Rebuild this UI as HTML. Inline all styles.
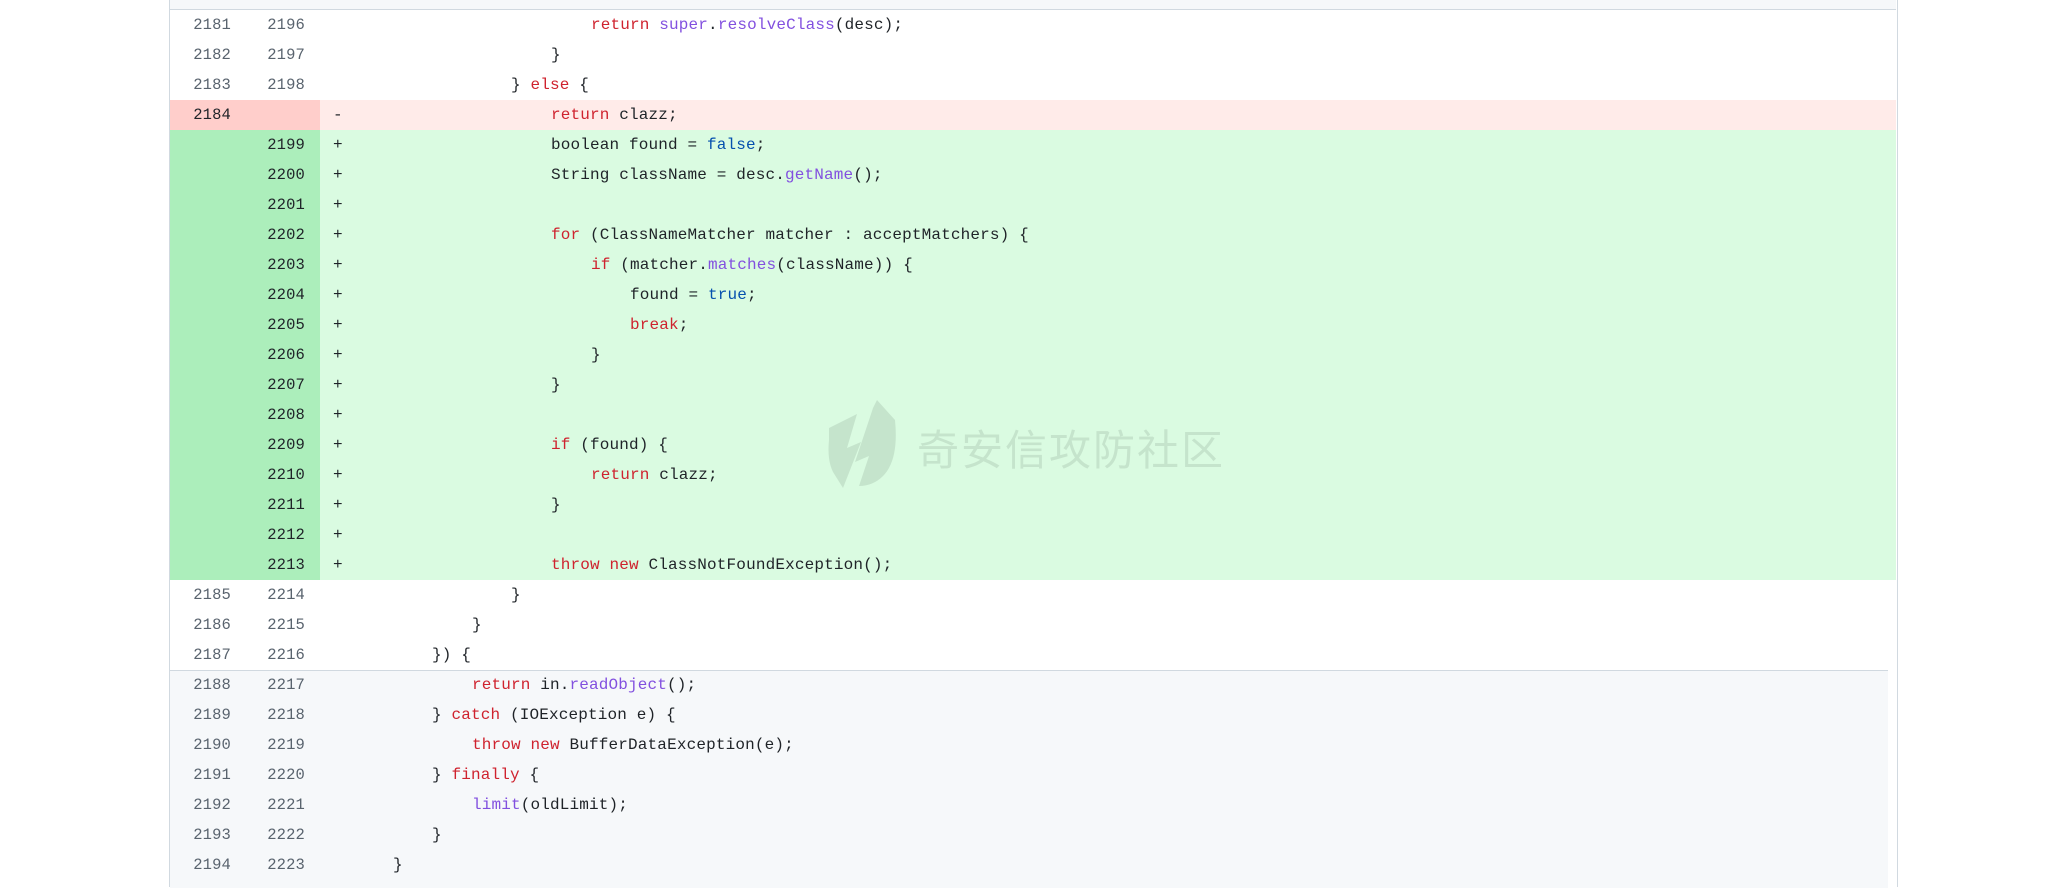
<!DOCTYPE html>
<html><head><meta charset="utf-8"><style>
body{margin:0;width:2054px;height:887px;background:#fff;overflow:hidden;position:relative;font-family:"Liberation Mono",monospace;}
.box{position:absolute;left:169px;top:0;width:1727px;height:887px;border-left:1px solid #d1d9e0;border-right:1px solid #d1d9e0;}
.top{position:absolute;left:170px;top:0;width:1726px;height:9px;background:#f6f8fa;border-bottom:1px solid #d1d9e0;}
.bot{position:absolute;left:170px;top:670px;width:1718px;height:217px;background:#f6f8fa;border-top:1px solid #d1d9e0;}
.row{position:absolute;left:170px;width:1726px;height:30px;line-height:30px;font-size:16px;color:#1f2328;white-space:pre;letter-spacing:0.15px;}
.n1,.n2{position:absolute;top:0;text-align:right;color:#59636e;font-size:15.5px;}
.n1{left:0;width:61px}.n2{left:76px;width:59px}
.g{position:absolute;left:0;top:0;width:150px;height:30px}
.s{position:absolute;left:163px;top:0}
.c{position:absolute;top:0}
.d{background:#ffebe9}.d .g{background:#ffcecb}
.a{background:#dafbe1}.a .g{background:#aceebb}.a .n2,.d .n1{color:#1f2328}
.k{color:#cf222e}.f{color:#8250df}.b{color:#0550ae}
.wm{position:absolute;left:917px;top:417px;font-family:"Noto Sans CJK SC",sans-serif;font-size:42px;color:rgba(60,80,70,0.13);letter-spacing:2px;}
</style></head><body>
<div class="top"></div>
<div class="bot"></div>
<div class="box"></div>
<div class="row" style="top:10px"><span class="n1">2181</span><span class="n2">2196</span><span class="c" style="left:421px"><span class="k">return</span> <span class="f">super</span>.<span class="f">resolveClass</span>(desc);</span></div>
<div class="row" style="top:40px"><span class="n1">2182</span><span class="n2">2197</span><span class="c" style="left:381px">}</span></div>
<div class="row" style="top:70px"><span class="n1">2183</span><span class="n2">2198</span><span class="c" style="left:341px">} <span class="k">else</span> {</span></div>
<div class="row d" style="top:100px"><div class="g"></div><span class="n1">2184</span><span class="s">-</span><span class="c" style="left:381px"><span class="k">return</span> clazz;</span></div>
<div class="row a" style="top:130px"><div class="g"></div><span class="n2">2199</span><span class="s">+</span><span class="c" style="left:381px">boolean found = <span class="b">false</span>;</span></div>
<div class="row a" style="top:160px"><div class="g"></div><span class="n2">2200</span><span class="s">+</span><span class="c" style="left:381px">String className = desc.<span class="f">getName</span>();</span></div>
<div class="row a" style="top:190px"><div class="g"></div><span class="n2">2201</span><span class="s">+</span></div>
<div class="row a" style="top:220px"><div class="g"></div><span class="n2">2202</span><span class="s">+</span><span class="c" style="left:381px"><span class="k">for</span> (ClassNameMatcher matcher : acceptMatchers) {</span></div>
<div class="row a" style="top:250px"><div class="g"></div><span class="n2">2203</span><span class="s">+</span><span class="c" style="left:421px"><span class="k">if</span> (matcher.<span class="f">matches</span>(className)) {</span></div>
<div class="row a" style="top:280px"><div class="g"></div><span class="n2">2204</span><span class="s">+</span><span class="c" style="left:460px">found = <span class="b">true</span>;</span></div>
<div class="row a" style="top:310px"><div class="g"></div><span class="n2">2205</span><span class="s">+</span><span class="c" style="left:460px"><span class="k">break</span>;</span></div>
<div class="row a" style="top:340px"><div class="g"></div><span class="n2">2206</span><span class="s">+</span><span class="c" style="left:421px">}</span></div>
<div class="row a" style="top:370px"><div class="g"></div><span class="n2">2207</span><span class="s">+</span><span class="c" style="left:381px">}</span></div>
<div class="row a" style="top:400px"><div class="g"></div><span class="n2">2208</span><span class="s">+</span></div>
<div class="row a" style="top:430px"><div class="g"></div><span class="n2">2209</span><span class="s">+</span><span class="c" style="left:381px"><span class="k">if</span> (found) {</span></div>
<div class="row a" style="top:460px"><div class="g"></div><span class="n2">2210</span><span class="s">+</span><span class="c" style="left:421px"><span class="k">return</span> clazz;</span></div>
<div class="row a" style="top:490px"><div class="g"></div><span class="n2">2211</span><span class="s">+</span><span class="c" style="left:381px">}</span></div>
<div class="row a" style="top:520px"><div class="g"></div><span class="n2">2212</span><span class="s">+</span></div>
<div class="row a" style="top:550px"><div class="g"></div><span class="n2">2213</span><span class="s">+</span><span class="c" style="left:381px"><span class="k">throw</span> <span class="k">new</span> ClassNotFoundException();</span></div>
<div class="row" style="top:580px"><span class="n1">2185</span><span class="n2">2214</span><span class="c" style="left:341px">}</span></div>
<div class="row" style="top:610px"><span class="n1">2186</span><span class="n2">2215</span><span class="c" style="left:302px">}</span></div>
<div class="row" style="top:640px"><span class="n1">2187</span><span class="n2">2216</span><span class="c" style="left:262px">}) {</span></div>
<div class="row" style="top:670px"><span class="n1">2188</span><span class="n2">2217</span><span class="c" style="left:302px"><span class="k">return</span> in.<span class="f">readObject</span>();</span></div>
<div class="row" style="top:700px"><span class="n1">2189</span><span class="n2">2218</span><span class="c" style="left:262px">} <span class="k">catch</span> (IOException e) {</span></div>
<div class="row" style="top:730px"><span class="n1">2190</span><span class="n2">2219</span><span class="c" style="left:302px"><span class="k">throw</span> <span class="k">new</span> BufferDataException(e);</span></div>
<div class="row" style="top:760px"><span class="n1">2191</span><span class="n2">2220</span><span class="c" style="left:262px">} <span class="k">finally</span> {</span></div>
<div class="row" style="top:790px"><span class="n1">2192</span><span class="n2">2221</span><span class="c" style="left:302px"><span class="f">limit</span>(oldLimit);</span></div>
<div class="row" style="top:820px"><span class="n1">2193</span><span class="n2">2222</span><span class="c" style="left:262px">}</span></div>
<div class="row" style="top:850px"><span class="n1">2194</span><span class="n2">2223</span><span class="c" style="left:223px">}</span></div>
<svg style="position:absolute;left:825px;top:400px" width="75" height="90" viewBox="0 0 75 90">
<path d="M4 28 L32 14 L22 48 L36 42 L18 88 L8 72 Q2 60 4 40 Z" fill="rgba(60,80,70,0.13)"/>
<path d="M70 20 Q74 60 58 76 Q48 86 34 86 L44 56 L30 62 L48 8 L52 0 Z" fill="rgba(60,80,70,0.13)"/>
</svg>
<div class="wm">奇安信攻防社区</div>
</body></html>
